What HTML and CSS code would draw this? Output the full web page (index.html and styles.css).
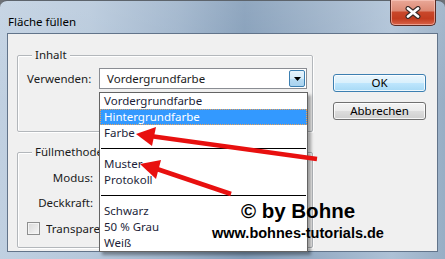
FILE: index.html
```html
<!DOCTYPE html>
<html lang="de">
<head>
<meta charset="utf-8">
<title>Fläche füllen</title>
<link rel="stylesheet" href="styles.css">
</head>
<body>
<div class="window">
  <div class="titlebar">
    <span class="title">Fläche füllen</span>
    <div class="close">
      <svg width="16" height="13" viewBox="0 0 16 13">
        <path d="M3 2.5 L13 10.5 M13 2.5 L3 10.5" stroke="#3b2a28" stroke-width="5" stroke-linecap="round"/>
        <path d="M3 2.5 L13 10.5 M13 2.5 L3 10.5" stroke="#ffffff" stroke-width="2.8" stroke-linecap="round"/>
      </svg>
    </div>
  </div>
  <div class="client">
    <div class="groups">
      <div class="group g1">
        <span class="legend">Inhalt</span>
        <div class="row">
          <span class="label">Verwenden:</span>
          <div class="combo">
            <span class="combo-text">Vordergrundfarbe</span>
            <span class="combo-btn">
              <svg width="7" height="4" viewBox="0 0 7 4"><path d="M0 0 H7 L3.5 4 Z" fill="#000"/></svg>
            </span>
          </div>
        </div>
      </div>
      <div class="group g2">
        <span class="legend clip">Füllmethode</span>
        <div class="row"><span class="label right">Modus:</span></div>
        <div class="row row2"><span class="label right">Deckkraft:</span></div>
        <div class="check"><span class="box"></span><span class="check-text">Transparenz erhalten</span></div>
      </div>
    </div>
    <div class="buttons">
      <div class="btn ok">OK</div>
      <div class="btn">Abbrechen</div>
    </div>
  </div>

  <ul class="list">
    <li>Vordergrundfarbe</li>
    <li class="sel">Hintergrundfarbe</li>
    <li>Farbe</li>
    <li class="sep"></li>
    <li>Muster</li>
    <li>Protokoll</li>
    <li class="sep"></li>
    <li>Schwarz</li>
    <li>50 % Grau</li>
    <li>Weiß</li>
  </ul>

  <svg class="arrows" width="445" height="259" viewBox="0 0 445 259">
    <line x1="317" y1="159" x2="150" y2="136" stroke="#e8100f" stroke-width="4.5"/>
    <polygon points="136,134 156,127 152,146" fill="#e8100f"/>
    <line x1="231" y1="194" x2="154" y2="168" stroke="#e8100f" stroke-width="4.5"/>
    <polygon points="140,164 161,160 156,179" fill="#e8100f"/>
  </svg>

  <div class="watermark">
    <div class="wm1">© by Bohne</div>
    <div class="wm2">www.bohnes-tutorials.de</div>
  </div>
</div>
</body>
</html>
```
FILE: styles.css
```css
* { box-sizing: border-box; }
html, body { margin: 0; padding: 0; }
body {
  width: 445px;
  height: 259px;
  overflow: hidden;
  background: #6d7177;
  font-family: "Noto Sans", "DejaVu Sans", sans-serif;
  font-size: 11.5px;
  color: #1b1b1b;
}
.window {
  position: relative;
  width: 445px;
  height: 259px;
  border-top: 1px solid #5d646c;
  border-radius: 7px 7px 0 0;
  background:
    linear-gradient(180deg, rgba(255,255,255,0.12) 0%, rgba(255,255,255,0) 40%),
    linear-gradient(90deg, #c0d0e1 0%, #b6c8db 20%, #9cb2ca 40%, #819bb7 55%, #98aec6 72%, #adc1d6 88%, #98aec5 100%);
  display: flex;
  flex-direction: column;
}
.titlebar {
  height: 32px;
  display: flex;
  align-items: flex-start;
  padding-left: 8px;
}
.title {
  margin-top: 13px;
  line-height: 15px;
  color: #000;
  font-size: 11.5px;
}
.close {
  margin-left: auto;
  margin-right: 9px;
  margin-top: -1px;
  width: 46px;
  height: 26px;
  border: 1px solid #5b2b24;
  border-top: none;
  border-radius: 0 0 5px 5px;
  background: linear-gradient(180deg, #e9a898 0%, #dd8a75 42%, #c8472a 50%, #c23c1f 75%, #d9644a 100%);
  box-shadow: inset 0 0 0 1px rgba(255,210,200,0.55);
  display: flex;
  align-items: center;
  justify-content: center;
}
.client {
  margin: 0 7px;
  height: 219px;
  border: 1px solid #62748a;
  background: #f0f0f0;
  display: flex;
  padding: 21px 11px 0 9px;
}
.groups {
  width: 296px;
  display: flex;
  flex-direction: column;
}
.group {
  position: relative;
  border: 1px solid #b3b7bb;
  border-radius: 2px;
  box-shadow: 1px 1px 0 #fff, inset 1px 1px 0 #fff;
  padding-left: 9px;
}
.legend {
  position: absolute;
  top: -9px;
  left: 14px;
  padding: 0 3px;
  background: #f0f0f0;
  line-height: 15px;
  white-space: nowrap;
}
.legend.clip {
  max-width: 67px;
  overflow: hidden;
}
.g1 {
  height: 77px;
  padding-top: 12px;
}
.g2 {
  margin-top: 20px;
  height: 96px;
  padding-top: 14px;
}
.row {
  display: flex;
  align-items: center;
  height: 21px;
}
.row2 { margin-top: 4px; }
.label { width: 72px; }
.label.right { width: 66px; text-align: right; }
.combo {
  width: 208px;
  height: 21px;
  background: #fff;
  border: 1px solid #8a8d93;
  display: flex;
  align-items: center;
  padding: 1px;
}
.combo-text { flex: 1; padding-left: 6px; }
.combo-btn {
  width: 16px;
  height: 17px;
  border: 1px solid #3c7fb1;
  border-radius: 2px;
  background: linear-gradient(180deg, #e7f4fc 0%, #d4ebfa 50%, #b9dcf3 51%, #a8d2ef 100%);
  display: flex;
  align-items: center;
  justify-content: center;
}
.check {
  margin-top: 8px;
  display: flex;
  align-items: center;
  height: 14px;
  white-space: nowrap;
}
.check-text {
  max-width: 54px;
  overflow: hidden;
}
.box {
  width: 13px;
  height: 13px;
  border: 1px solid #8e8f8f;
  background: linear-gradient(135deg, #d8d8d8 0%, #f6f6f6 100%);
  box-shadow: inset 0 0 0 1px #f4f4f4;
  margin-right: 6px;
}
.buttons {
  margin-left: 20px;
  margin-top: 19px;
  width: 93px;
  display: flex;
  flex-direction: column;
  gap: 10px;
}
.btn {
  height: 18px;
  border: 1px solid #707070;
  border-radius: 3px;
  background: linear-gradient(180deg, #f3f3f3 0%, #ebebeb 50%, #dddddd 51%, #cfcfcf 100%);
  box-shadow: inset 0 0 0 1px rgba(255,255,255,0.8);
  text-align: center;
  line-height: 16px;
  color: #000;
}
.btn.ok {
  border-color: #3c7fb1;
  background: linear-gradient(180deg, #eaf6fd 0%, #d9f0fc 50%, #bee6fd 51%, #a7d9f5 100%);
}
.list {
  position: absolute;
  left: 99px;
  top: 91px;
  width: 209px;
  margin: 0;
  padding: 0;
  list-style: none;
  background: #fff;
  border: 1px solid #646464;
  box-shadow: 3px 3px 3px rgba(0,0,0,0.35);
  color: #1d1f3a;
}
.list li {
  height: 16px;
  line-height: 16px;
  padding-left: 4px;
}
.list li.sel {
  background: #3399ff;
  color: #fff;
  outline: 1px dotted #e9a25a;
  outline-offset: -1px;
}
.list li.sep {
  height: 15px;
  margin: 0 1px;
  background: linear-gradient(180deg, transparent 7px, #000 7px, #000 8px, transparent 8px);
}
.arrows {
  position: absolute;
  left: 0;
  top: -1px;
  pointer-events: none;
}
.watermark {
  position: absolute;
  left: 198px;
  top: 199px;
  width: 200px;
  text-align: center;
  font-family: "Liberation Sans", Arial, sans-serif;
  font-weight: bold;
  color: #000;
  white-space: nowrap;
}
.wm1 { font-size: 20.5px; line-height: 21px; }
.wm2 { font-size: 14.5px; line-height: 18px; margin-top: 3px; }
```
